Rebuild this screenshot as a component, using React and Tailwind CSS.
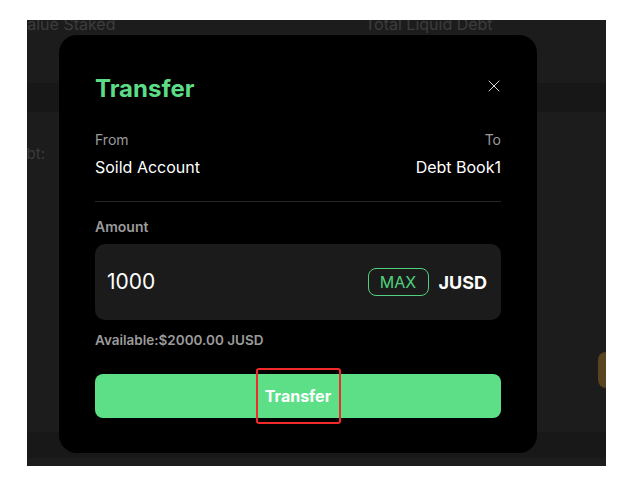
import { X } from "lucide-react";

export default function App() {
  return (
    <div className="w-[635px] h-[485px] bg-white pt-[20px] pl-[27px] font-['Inter','Liberation_Sans',sans-serif]">
      {/* dimmed page behind the dialog */}
      <div className="relative w-[579px] h-[446px] bg-[#1c1c1c] overflow-hidden">
        <div className="h-[63px] bg-[#1c1c1c] flex text-[16px] leading-[24px] text-[#3d3d3d]">
          <span className="-mt-[8px] -ml-[10px] w-[348px]">Value Staked</span>
          <span className="-mt-[8px]">Total Liquid Debt</span>
        </div>
        <div className="h-[29px] bg-[#171717]" />
        <div className="h-[320px] bg-[#1c1c1c]">
          <div className="pt-[32px] -ml-[20px] text-[15px] leading-[20px] text-[#3b3b3b]">Debt:</div>
        </div>
        <div className="h-[26px] bg-[#181818]" />
        <div className="absolute right-0 top-[332px] w-[8px] h-[36px] rounded-l-[8px] bg-[#5a4420]" />

        {/* dialog */}
        <div className="absolute left-[32px] top-[15px] w-[478px] h-[418px] rounded-[18px] bg-black px-[36px] pt-[38px]">
          <div className="flex items-center justify-between">
            <h2 className="text-[24px] leading-[32px] font-bold text-[#5cdc86]">Transfer</h2>
            <X className="w-[20px] h-[20px] text-[#d8d8d8] -mr-[3px] -mt-[7px]" strokeWidth={1.2} />
          </div>

          <div className="mt-[25px] pb-[23px] border-b border-[#262626]">
            <div className="flex justify-between text-[14px] leading-[20px] text-[#9b9b9b]">
              <span>From</span>
              <span>To</span>
            </div>
            <div className="mt-[6px] flex justify-between text-[16px] leading-[22px] text-white">
              <span>Soild Account</span>
              <span>Debt Book1</span>
            </div>
          </div>

          <div className="mt-[15px] text-[14px] leading-[20px] font-semibold text-[#9b9b9b]">Amount</div>
          <div className="mt-[7px] h-[76px] rounded-[10px] bg-[#1b1b1b] flex items-center pl-[12px] pr-[14px]">
            <span className="flex-1 text-[21px] text-white">1000</span>
            <span className="h-[28px] w-[61px] rounded-[8px] border border-[#4fd07c] text-[16px] text-[#4fd07c] flex items-center justify-center">MAX</span>
            <span className="ml-[10px] text-[18px] font-bold text-white">JUSD</span>
          </div>
          <div className="mt-[11px] text-[13.5px] leading-[18px] font-semibold text-[#9b9b9b]">Available:$2000.00 JUSD</div>

          <div className="relative mt-[25px]">
            <button className="w-full h-[44px] rounded-[8px] bg-[#5ddf88] text-white text-[16px] font-bold">Transfer</button>
            <div className="absolute left-[161px] -top-[6px] w-[85px] h-[56px] border-2 border-[#f02a2a] rounded-[3px]" />
          </div>
        </div>
      </div>
    </div>
  );
}
